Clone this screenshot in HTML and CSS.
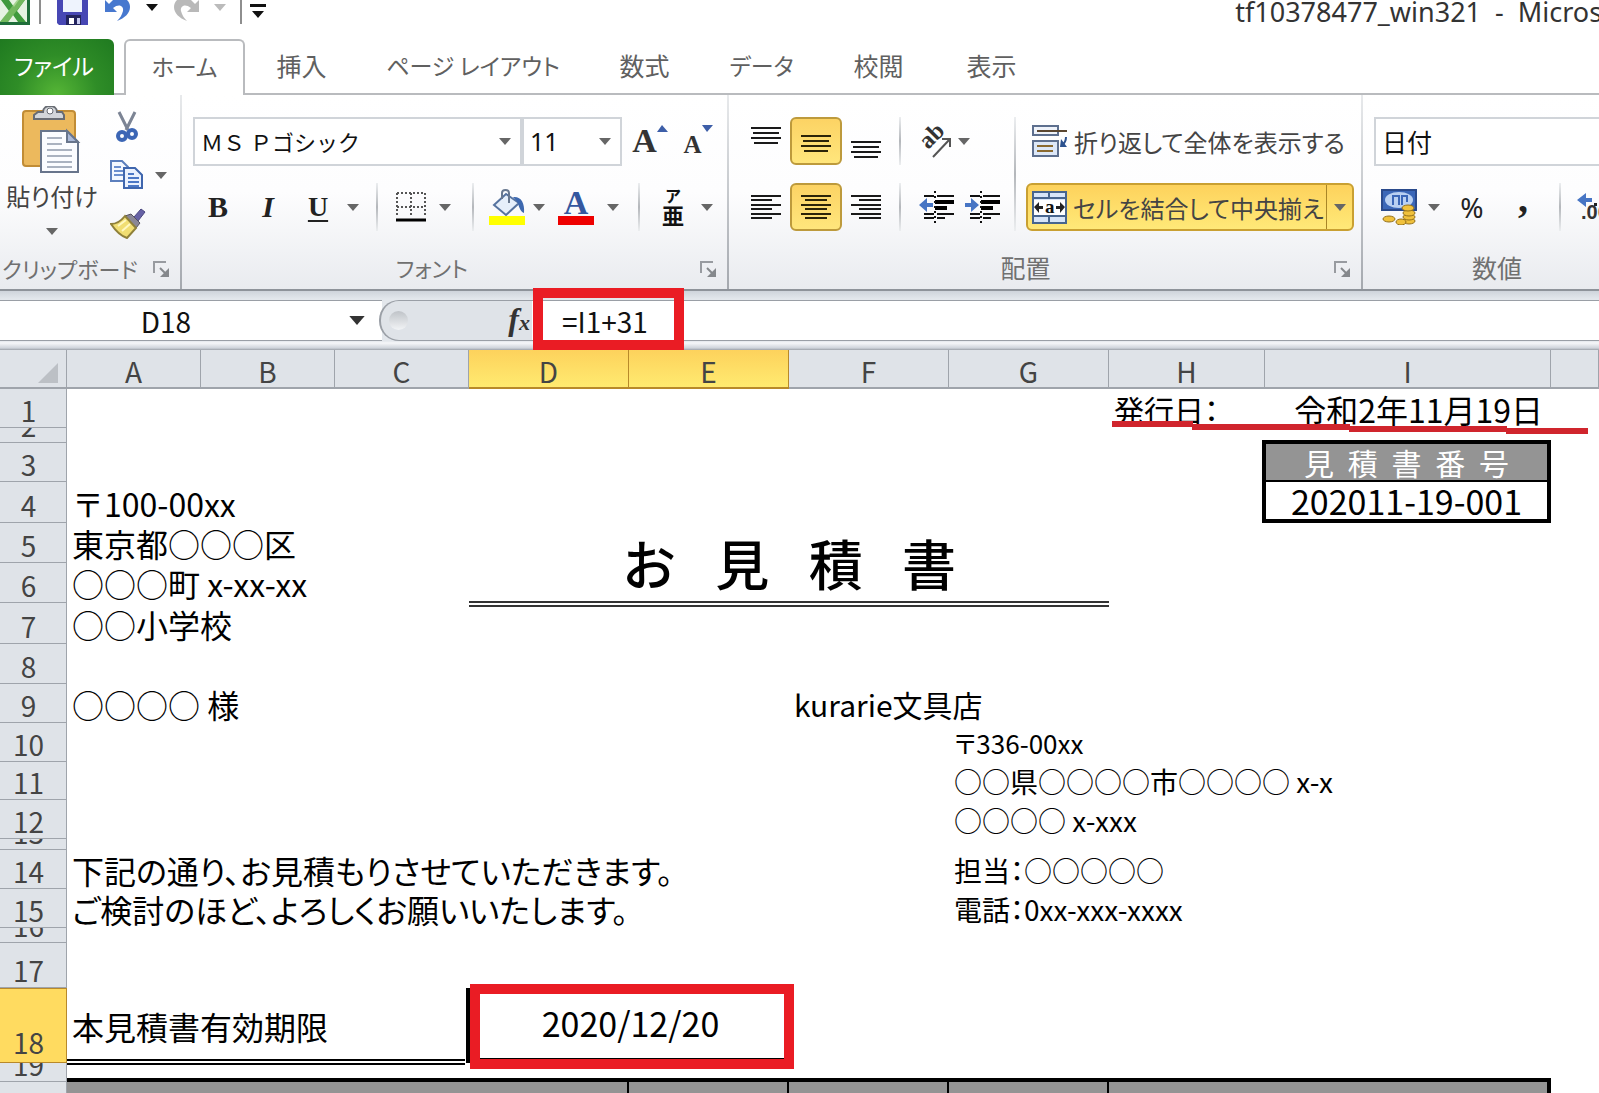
FILE: index.html
```html
<!DOCTYPE html>
<html lang="ja">
<head>
<meta charset="utf-8">
<title>tf10378477_win321 - Microsoft Excel</title>
<link rel="stylesheet" href="styles.css">
</head>
<body>
<svg class="defs" aria-hidden="true">
  <symbol id="caret" viewBox="0 0 12 7"><path d="M0 0h12L6 7z" fill="currentColor"/></symbol>
  <symbol id="launcher" viewBox="0 0 17 17"><path d="M1 12V1h12" fill="none" stroke="#989ba0" stroke-width="2"/><path d="M7 7l6 6" stroke="#85888c" stroke-width="2"/><path d="M16 7v9H7z" fill="#85888c"/></symbol>
</svg>
<div class="app">
  <header class="titlebar">
    <div class="quick">
      <svg class="logo" width="31" height="26" viewBox="0 0 31 26"><path d="M0 0h30v25H0z" fill="#1f6e3a"/><path d="M0 0h27v22H0z" fill="#e6f3e2"/><path d="M1 0h8l5 7 5-7h6l-8 11 9 11h-8l-5-7-5 7H0l9-11z" fill="#3f9a3c"/><path d="M17 0h8L8 22H0z" fill="#8ac66c" opacity=".7"/></svg>
      <span class="rule"></span>
      <button class="qbtn save" aria-label="上書き保存"><svg width="31" height="25" viewBox="0 0 31 25"><path d="M0 0h31v25H2l-2-2z" fill="#4747b4"/><path d="M6 0h19v12H6z" fill="#eef3fd"/><path d="M9 15h15v10H9z" fill="#23245e"/><path d="M12 18h5v6h-5z" fill="#fff"/><path d="M20 18h3v6h-3z" fill="#c8ccf2"/></svg></button>
      <button class="qbtn undo" aria-label="元に戻す"><svg width="28" height="22" viewBox="0 0 28 22"><path d="M1 0v12h12L9 8c6-5 11-2 10 3-1 4-3 7-6 10 8-3 13-8 13-14 0-3-1-5-3-7H9L5 4z" fill="#4778cf"/></svg></button>
      <button class="qbtn drop" aria-label="元に戻す一覧"><svg width="12" height="7"><use href="#caret"/></svg></button>
      <button class="qbtn redo" aria-label="やり直し"><svg width="28" height="22" viewBox="0 0 28 22"><path d="M27 0v12H15l4-4C13 3 8 6 9 11c1 4 3 7 6 10C7 18 2 13 2 7c0-3 1-5 3-7h14l4 4z" fill="#b9b9b9"/></svg></button>
      <button class="qbtn drop off" aria-label="やり直し一覧"><svg width="12" height="7"><use href="#caret"/></svg></button>
      <span class="rule"></span>
      <button class="qbtn custom" aria-label="クイック アクセス ツール バーのカスタマイズ"><svg width="16" height="14" viewBox="0 0 16 14"><path d="M0 0h16v3H0zM2 7h12l-6 7z" fill="#111"/></svg></button>
    </div>
    <div class="doc-title">tf10378477_win321&nbsp; -&nbsp; Microsoft Excel</div>
  </header>

  <nav class="tabs">
    <button class="tab file kana">ファイル</button>
    <button class="tab active kana">ホーム</button>
    <button class="tab">挿入</button>
    <button class="tab wide kana">ページ レイアウト</button>
    <button class="tab">数式</button>
    <button class="tab mid kana">データ</button>
    <button class="tab">校閲</button>
    <button class="tab">表示</button>
  </nav>

  <section class="ribbon">
    <div class="group clipboard">
      <div class="clip-body">
        <button class="paste">
          <svg width="60" height="68" viewBox="0 0 60 68"><rect x="1" y="5" width="52" height="55" rx="3" fill="#ecb95d" stroke="#c18c35" stroke-width="2"/><path d="M12 13V9l4-3h5c0-8 14-8 14 0h5l2 3v4z" fill="#d3d6da" stroke="#686c73" stroke-width="2"/><circle cx="28" cy="5" r="3" fill="#fff" stroke="#686c73"/><path d="M19 25h26l11 11v30H19z" fill="#fbfcff" stroke="#68758c" stroke-width="2"/><path d="M45 25v11h11z" fill="#aab9d8" stroke="#68758c" stroke-width="2"/><path d="M25 32h15M25 38h15M25 44h25M25 50h25M25 56h25M25 61h25" stroke="#aab2c0" stroke-width="2"/></svg>
          <span class="ptext">貼り付け</span>
          <svg class="caret" width="12" height="7"><use href="#caret"/></svg>
        </button>
        <div class="clip-tools">
          <button class="ic" aria-label="切り取り"><svg width="22" height="32" viewBox="0 0 22 32"><path d="M3 1l9 18M19 1l-9 18" stroke="#7c8494" stroke-width="3"/><circle cx="6" cy="25" r="4" fill="none" stroke="#3c66b5" stroke-width="4"/><circle cx="16" cy="23" r="4" fill="none" stroke="#3c66b5" stroke-width="4"/></svg></button>
          <div class="pair"><button class="ic" aria-label="コピー"><svg width="34" height="30" viewBox="0 0 34 30"><path d="M1 1h11l6 6v14H1z" fill="#f4f8ff" stroke="#5c7fbd" stroke-width="2"/><path d="M4 7h7M4 11h10M4 15h10" stroke="#6c8fce" stroke-width="2"/><path d="M14 8h11l7 7v13H14z" fill="#eaf1fe" stroke="#3f66ae" stroke-width="2"/><path d="M18 14h6M18 18h11M18 22h11M18 26h11" stroke="#4c78c6" stroke-width="2"/></svg></button><button class="ic arrow" aria-label="コピーの種類"><svg width="12" height="7"><use href="#caret"/></svg></button></div>
          <button class="ic" aria-label="書式のコピー"><svg width="36" height="31" viewBox="0 0 36 31"><path d="M24 9l7-8 4 3-7 9z" fill="#6661a5" stroke="#4a467f"/><path d="M15 8l6-2 9 9-4 5z" fill="#8a8796" stroke="#55525f"/><path d="M15 8l11 12-9 10C11 28 5 22 1 16c6 0 10-3 14-8z" fill="#f1de72" stroke="#8f803a" stroke-width="2"/><path d="M8 18l8-6M12 23l8-7" stroke="#fff8c0" stroke-width="2"/></svg></button>
        </div>
      </div>
      <div class="caption start kana"><span>クリップボード</span><button class="launch" aria-label="クリップボードの詳細"><svg width="17" height="17"><use href="#launcher"/></svg></button></div>
    </div>

    <div class="group font">
      <div class="line">
        <span class="combo face"><select aria-label="フォント"><option>ＭＳ Ｐゴシック</option></select><svg class="caret" width="12" height="7"><use href="#caret"/></svg></span>
        <span class="combo size"><select aria-label="フォント サイズ"><option>11</option></select><svg class="caret" width="12" height="7"><use href="#caret"/></svg></span>
        <button class="ic w56 grow" aria-label="フォント サイズの拡大"><span class="bigA">A</span><svg class="tri" width="11" height="7" viewBox="0 0 11 7"><path d="M0 7h11L5 0z" fill="#3d5ea8"/></svg></button>
        <button class="ic w40 grow" aria-label="フォント サイズの縮小"><span class="smallA">A</span><svg class="tri" width="11" height="7" viewBox="0 0 11 7"><path d="M0 0h11L5 7z" fill="#3d5ea8"/></svg></button>
      </div>
      <div class="line">
        <button class="ic w50 serif bold">B</button>
        <button class="ic w50 serif italic">I</button>
        <button class="ic w50 serif under">U</button>
        <button class="ic w20" aria-label="下線の種類"><svg width="12" height="7"><use href="#caret"/></svg></button>
        <span class="sep"></span>
        <button class="ic w40" aria-label="罫線"><svg width="30" height="30" viewBox="0 0 30 30"><path d="M1 1h28M1 15h28M1 1v24M15 1v24M29 1v24" stroke="#555" stroke-width="2" stroke-dasharray="2 2" fill="none"/><path d="M0 28h30" stroke="#000" stroke-width="3"/></svg></button>
        <button class="ic w28" aria-label="罫線の種類"><svg width="12" height="7"><use href="#caret"/></svg></button>
        <span class="sep"></span>
        <button class="ic w40" aria-label="塗りつぶしの色"><svg width="36" height="36" viewBox="0 0 36 36"><path d="M0 27h36v9H0z" fill="#ff0"/><path d="M5 16L17 5l13 9-13 12z" fill="#e6effa" stroke="#56739f" stroke-width="2"/><path d="M13 10V4c0-4 7-4 7 0v10" fill="none" stroke="#68788f" stroke-width="2"/><path d="M24 8c8-1 12 6 11 16-3-1-5-5-6-10z" fill="#3d68af"/></svg></button>
        <button class="ic w24" aria-label="塗りつぶしの色一覧"><svg width="12" height="7"><use href="#caret"/></svg></button>
        <button class="ic w50 colorA" aria-label="フォントの色"><span>A</span></button>
        <button class="ic w24" aria-label="フォントの色一覧"><svg width="12" height="7"><use href="#caret"/></svg></button>
        <span class="sep"></span>
        <button class="ic w40 ruby" aria-label="ふりがなの表示"><span class="rt">ア</span><span class="rb">亜</span></button>
        <button class="ic w28" aria-label="ふりがなの設定"><svg width="12" height="7"><use href="#caret"/></svg></button>
      </div>
      <div class="caption kana"><span>フォント</span><button class="launch" aria-label="フォントの詳細"><svg width="17" height="17"><use href="#launcher"/></svg></button></div>
    </div>

    <div class="group align">
      <div class="align-body">
        <div class="stack">
          <div class="line">
            <button class="ic w40" aria-label="上揃え"><svg width="32" height="34" viewBox="0 0 32 34"><path d="M1 4h30M3 9h26M1 14h30M4 19h24" stroke="#1a1a1a" stroke-width="2"/></svg></button>
            <button class="ic on" aria-label="上下中央揃え"><svg width="32" height="34" viewBox="0 0 32 34"><path d="M1 12h30M3 17h26M1 22h30M4 27h24" stroke="#2c2408" stroke-width="2"/></svg></button>
            <button class="ic w40" aria-label="下揃え"><svg width="32" height="34" viewBox="0 0 32 34"><path d="M1 18h30M3 23h26M1 28h30M4 33h24" stroke="#1a1a1a" stroke-width="2"/></svg></button>
            <span class="sep"></span>
            <button class="ic w40" aria-label="方向"><svg width="36" height="34" viewBox="0 0 36 34"><text x="12" y="26" transform="rotate(-45 12 26)" class="abtext">ab</text><path d="M17 33L34 15M26 15h8v8" fill="none" stroke="#555" stroke-width="2"/></svg></button>
            <button class="ic w20" aria-label="方向の種類"><svg width="12" height="7"><use href="#caret"/></svg></button>
          </div>
          <div class="line">
            <button class="ic w40" aria-label="左揃え"><svg width="32" height="28" viewBox="0 0 32 28"><path d="M1 3h30M1 7h21M1 12h30M1 16h21M1 21h30M1 25h21" stroke="#1a1a1a" stroke-width="2"/></svg></button>
            <button class="ic on" aria-label="中央揃え"><svg width="32" height="28" viewBox="0 0 32 28"><path d="M1 3h30M5 7h22M1 12h30M5 16h22M1 21h30M5 25h22" stroke="#2c2408" stroke-width="2"/></svg></button>
            <button class="ic w40" aria-label="右揃え"><svg width="32" height="28" viewBox="0 0 32 28"><path d="M1 3h30M9 7h22M1 12h30M9 16h22M1 21h30M9 25h22" stroke="#1a1a1a" stroke-width="2"/></svg></button>
            <span class="sep"></span>
            <button class="ic w46" aria-label="インデントを減らす"><svg width="36" height="34" viewBox="0 0 36 34"><path d="M5 6h10M18 6h17M5 24h10M18 24h17M5 28h10M18 28h8" stroke="#111" stroke-width="2"/><path d="M16 12h19M16 18h12" stroke="#000" stroke-width="4"/><path d="M16 1v32" stroke="#111" stroke-width="2" stroke-dasharray="2 3"/><path d="M0 15l8-7v5h6v4H8v5z" fill="#4775c4"/></svg></button>
            <button class="ic w46" aria-label="インデントを増やす"><svg width="36" height="34" viewBox="0 0 36 34"><path d="M5 6h10M18 6h17M5 24h10M18 24h17M5 28h10M18 28h8" stroke="#111" stroke-width="2"/><path d="M16 12h19M16 18h12" stroke="#000" stroke-width="4"/><path d="M16 1v32" stroke="#111" stroke-width="2" stroke-dasharray="2 3"/><path d="M14 15L6 8v5H0v4h6v5z" fill="#4775c4"/></svg></button>
          </div>
        </div>
        <span class="longsep"></span>
        <div class="stack right-col">
          <button class="wrapbtn"><svg width="36" height="34" viewBox="0 0 36 34"><rect x="1" y="2" width="25" height="9" fill="#eff3fa" stroke="#5d6f8e" stroke-width="2"/><path d="M5 7h30" stroke="#5a4630" stroke-width="2"/><rect x="1" y="17" width="25" height="15" fill="#dde8f8" stroke="#5d6f8e" stroke-width="2"/><path d="M5 22h16M5 27h16" stroke="#8a6a30" stroke-width="2"/><path d="M34 13c0 4-1 6-4 8" fill="none" stroke="#2d528f" stroke-width="2"/><path d="M28 23h7l-6-8z" fill="#2d528f"/></svg><span>折り返して全体を表示する</span></button>
          <div class="merge"><button class="merge-main"><svg width="35" height="33" viewBox="0 0 35 33"><path d="M1 1h33v31H1z" fill="#d7e5f8" stroke="#47658e" stroke-width="2"/><path d="M1 7h33M1 25h33M17 1v6M17 25v7" stroke="#47658e" stroke-width="2"/><path d="M2 9h31v15H2z" fill="#fff"/><path d="M2 16l5-5v4h4v3H7v4zM33 16l-5-5v4h-4v3h4v4z" fill="#222"/><text x="13" y="22" class="atext">a</text></svg><span>セルを結合して中央揃え</span></button><button class="merge-drop" aria-label="結合の種類"><svg width="12" height="7"><use href="#caret"/></svg></button></div>
        </div>
      </div>
      <div class="caption"><span>配置</span><button class="launch" aria-label="配置の詳細"><svg width="17" height="17"><use href="#launcher"/></svg></button></div>
    </div>

    <div class="group number">
      <div class="line"><span class="combo format"><select aria-label="表示形式"><option>日付</option></select></span></div>
      <div class="line">
        <button class="ic w50" aria-label="通貨表示形式"><svg width="36" height="36" viewBox="0 0 36 36"><rect x="1" y="1" width="34" height="20" fill="#3b67b8" stroke="#2a4a8c" stroke-width="2"/><ellipse cx="18" cy="11" rx="14" ry="8" fill="#b9d0f2"/><path d="M12 16V7h6v9M21 16V7h5v6" fill="none" stroke="#3b67b8" stroke-width="2"/><g fill="#f0c13c" stroke="#94701a"><ellipse cx="28" cy="32" rx="6" ry="3"/><ellipse cx="28" cy="28" rx="6" ry="3"/><ellipse cx="28" cy="24" rx="6" ry="3"/><ellipse cx="27" cy="19" rx="6" ry="3"/><ellipse cx="20" cy="33" rx="5" ry="3"/><ellipse cx="8" cy="30" rx="6" ry="3"/></g></svg></button>
        <button class="ic w20" aria-label="通貨の種類"><svg width="12" height="7"><use href="#caret"/></svg></button>
        <button class="ic w56 percent">%</button>
        <button class="ic w46 comma">,</button>
        <span class="sep"></span>
        <button class="ic w50 decimal" aria-label="小数点以下の表示桁数を増やす"><svg width="46" height="32" viewBox="0 0 46 32"><path d="M1 9l9-7v5h6v4h-6v5z" fill="#4775c4"/><text x="5" y="28" class="dectext">.00</text><path d="M18 12h3v3h-3z" fill="#222"/></svg></button>
      </div>
      <div class="caption"><span>数値</span></div>
    </div>
  </section>

  <section class="formula">
    <input class="namebox" aria-label="名前ボックス" value="D18">
    <button class="namedrop" aria-label="名前の一覧"><svg width="16" height="9"><use href="#caret"/></svg></button>
    <div class="fx"><span class="knob"></span><button class="fxbtn" aria-label="関数の挿入"><i>f</i><i class="x">x</i></button></div>
    <div class="entry"><input aria-label="数式バー" value="=I1+31"><span class="mark"></span></div>
  </section>

  <main class="sheet">
    <table>
      <colgroup><col class="c-head"><col class="c-a"><col class="c-a"><col class="c-a"><col class="c-d"><col class="c-d"><col class="c-d"><col class="c-d"><col class="c-h"><col class="c-i"><col></colgroup>
      <thead><tr><th class="corner"><svg width="20" height="20" viewBox="0 0 20 20"><path d="M20 0v20H0z" fill="#bcc0c5"/></svg></th><th>A</th><th>B</th><th>C</th><th class="sel">D</th><th class="sel">E</th><th>F</th><th>G</th><th>H</th><th>I</th><th></th></tr></thead>
      <tbody>
        <tr><th><div>1</div></th><td colspan="7"></td><td class="t30">発行日：<svg class="stroke" width="476" height="14" viewBox="0 0 476 14"><path d="M0 3h81M80 6h158M237 8h158M394 10h82" stroke="#d0252d" stroke-width="6"/></svg></td><td class="right">令和2年11月19日</td><td></td></tr>
        <tr class="h15"><th><div>2</div></th><td colspan="10"></td></tr>
        <tr><th><div>3</div></th><td colspan="8"></td><td class="numhead">見積書番号</td><td></td></tr>
        <tr class="h41"><th><div>4</div></th><td colspan="8">〒100-00xx</td><td class="numval">202011-19-001</td><td></td></tr>
        <tr class="h40"><th><div>5</div></th><td colspan="3">東京都○○○区</td><td colspan="4" rowspan="2" class="heading"><div>お見積書</div></td><td colspan="3"></td></tr>
        <tr class="h40"><th><div>6</div></th><td colspan="3">○○○町 x-xx-xx</td><td colspan="3"></td></tr>
        <tr class="h41"><th><div>7</div></th><td colspan="10">○○小学校</td></tr>
        <tr class="h40"><th><div>8</div></th><td colspan="10"></td></tr>
        <tr><th><div>9</div></th><td colspan="5">○○○○ 様</td><td colspan="5" class="t30">kurarie文具店</td></tr>
        <tr><th><div>10</div></th><td colspan="6"></td><td colspan="4" class="t26">〒336-00xx</td></tr>
        <tr class="h38"><th><div>11</div></th><td colspan="6"></td><td colspan="4" class="t28">○○県○○○○市○○○○ x-x</td></tr>
        <tr><th><div>12</div></th><td colspan="6"></td><td colspan="4" class="t28">○○○○ x-xxx</td></tr>
        <tr class="h11"><th><div>13</div></th><td colspan="10"></td></tr>
        <tr><th><div>14</div></th><td colspan="6" class="prose">下記の通り、お見積もりさせていただきます。</td><td colspan="4" class="t28">担当：○○○○○</td></tr>
        <tr><th><div>15</div></th><td colspan="6" class="prose">ご検討のほど、よろしくお願いいたします。</td><td colspan="4" class="t28">電話：0xx-xxx-xxxx</td></tr>
        <tr class="h15"><th><div>16</div></th><td colspan="10"></td></tr>
        <tr class="h45"><th><div>17</div></th><td colspan="10"></td></tr>
        <tr class="h75"><th class="sel"><div>18</div></th><td colspan="3" class="limit">本見積書有効期限</td><td colspan="2" class="deadline">2020/12/20<span class="mark"></span></td><td colspan="5"></td></tr>
        <tr class="h19"><th><div>19</div></th><td colspan="10"></td></tr>
        <tr class="items"><th><div></div></th><td colspan="4"></td><td></td><td></td><td></td><td colspan="2"></td><td class="outside"></td></tr>
      </tbody>
    </table>
  </main>
</div>
</body>
</html>
```
FILE: styles.css
```css
* { box-sizing: border-box; }

body {
  margin: 0;
  background: #fff;
  color: #111;
  font-family: "Noto Sans CJK JP", sans-serif;
}

button, input, select {
  margin: 0;
  padding: 0;
  border: 0;
  background: none;
  color: inherit;
  font: inherit;
}

svg { display: block; flex: none; }
.defs { position: absolute; width: 0; height: 0; }

.app {
  display: flex;
  flex-direction: column;
  height: 100vh;
  overflow: hidden;
}

/* title bar */
.titlebar {
  display: flex;
  justify-content: space-between;
  height: 39px;
  flex: none;
}
.quick { display: flex; align-items: flex-start; }
.rule { width: 2px; height: 24px; margin: 0 8px; background: #8e8e8e; }
.qbtn { display: flex; justify-content: center; }
.save { margin: 0 8px; }
.undo { width: 44px; }
.redo { width: 44px; }
.drop { width: 24px; padding-top: 4px; color: #111; }
.drop.off { color: #bbb; }
.custom { padding-top: 4px; }
.doc-title {
  width: 23%;
  padding-left: 4px;
  overflow: hidden;
  white-space: nowrap;
  color: #333;
  font: 27px/24px "Noto Sans", sans-serif;
}

/* ribbon tabs */
.tabs {
  display: flex;
  flex: none;
  height: 56px;
  border-bottom: 2px solid #b9bbbe;
}
.tab {
  width: 113px;
  height: 56px;
  padding-bottom: 4px;
  color: #606060;
  font-size: 25px;
  font-feature-settings: "palt";
  white-space: nowrap;
}
.tab.kana { font-size: 23px; }
.tab.file {
  width: 114px;
  margin-right: 10px;
  padding-right: 6px;
  border-radius: 0 6px 0 0;
  background: radial-gradient(ellipse at 50% 100%, #56b636 0, #2f8d27 50%, #1f7a20 100%);
  color: #fff;
}
.tab.active {
  width: 121px;
  border: 2px solid #b9bbbe;
  border-bottom: 0;
  border-radius: 6px 6px 0 0;
  background: #fff;
}
.tab.wide { width: 230px; }
.tab.mid { width: 121px; }

/* ribbon body */
.ribbon {
  display: flex;
  flex: none;
  height: 196px;
  border-bottom: 2px solid #8e939a;
  background: linear-gradient(#fff 0, #fdfdfe 50%, #e9ebef 100%);
  color: #444;
}
.group {
  display: flex;
  flex-direction: column;
  flex: none;
  gap: 18px;
  padding: 22px 0 0 11px;
  border-right: 2px solid;
  border-image: linear-gradient(#e8eaec, #a4a8ae) 1;
}
.clipboard { width: 182px; padding: 8px 0 0; gap: 0; }
.font { width: 547px; }
.align { width: 634px; padding-left: 17px; }
.number { flex: 1; min-width: 0; border-right: 0; overflow: hidden; }

.line { display: flex; align-items: center; flex: none; height: 48px; }
.ic { display: flex; align-items: center; justify-content: center; flex: none; height: 48px; color: #222; }
.ic use, .caret, .merge-drop { color: #666; }
.w20 { width: 20px; }
.w24 { width: 24px; }
.w28 { width: 28px; }
.w40 { width: 40px; }
.w46 { width: 46px; }
.w50 { width: 50px; }
.w56 { width: 56px; }
.sep {
  flex: none;
  width: 28px;
  height: 48px;
  background: linear-gradient(#eceef0, #b4b7bb, #eceef0) center / 2px 100% no-repeat;
}

.clip-body { display: flex; height: 144px; flex: none; }
.paste {
  display: flex;
  flex-direction: column;
  align-items: center;
  width: 104px;
  padding-top: 3px;
  font-size: 24px;
  line-height: 32px;
  color: #444;
}
.paste .caret { margin-top: 16px; }
.ptext { margin-top: 6px; font-feature-settings: "palt"; white-space: nowrap; }
.clip-tools { display: flex; flex-direction: column; align-items: flex-start; padding-left: 6px; }
.clip-tools .ic { min-width: 34px; }
.pair { display: flex; }

.caption {
  display: flex;
  align-items: center;
  justify-content: center;
  position: relative;
  height: 40px;
  padding-right: 56px;
  color: #707070;
  font-size: 25px;
  font-feature-settings: "palt";
  white-space: nowrap;
}
.caption.kana { font-size: 22px; }
.group:not(.clipboard) .caption { margin-top: -2px; }
.caption.start { justify-content: flex-start; padding: 0 0 0 2px; height: 42px; }
.launch { position: absolute; right: 10px; top: 14px; }

.combo {
  display: flex;
  align-items: center;
  flex: none;
  height: 49px;
  border: 2px solid #d0d4d9;
  background: #fff;
}
.combo select {
  flex: 1;
  min-width: 0;
  height: 100%;
  padding: 0 6px;
  appearance: none;
  color: #111;
  font-size: 22px;
}
.combo .caret { margin-right: 9px; }
.combo.face { width: 329px; }
.combo.size { width: 100px; }
.combo.size select { font: 25px "Noto Sans", sans-serif; }
.combo.format { width: 320px; }
.combo.format select { font-size: 25px; }

.bigA, .smallA { color: #333; font-family: "Liberation Serif", serif; font-weight: bold; line-height: 48px; }
.bigA { font-size: 34px; }
.smallA { font-size: 25px; padding-top: 4px; }
.grow { align-items: flex-start; }
.grow .tri { margin-top: 8px; }
.serif { font: 30px/48px "Liberation Serif", serif; }
.serif.bold, .serif.under { font-weight: bold; }
.serif.italic { font-style: italic; font-weight: bold; }
.serif.under { text-decoration: underline; text-underline-offset: 4px; font-size: 28px; }
.colorA span {
  width: 36px;
  height: 36px;
  border-bottom: 9px solid #e00;
  color: #35579f;
  font: bold 34px/27px "Liberation Serif", serif;
}
.ruby { flex-direction: column; font-weight: 700; color: #111; }
.ruby .rt { font-size: 16px; line-height: 14px; }
.ruby .rb { font-size: 22px; line-height: 24px; }

.align-body { display: flex; height: 114px; flex: none; }
.stack { display: flex; flex-direction: column; flex: none; gap: 18px; }
.on {
  width: 52px;
  margin: 0 4px;
  border: 2px solid #bd9a3c;
  border-radius: 6px;
  background: linear-gradient(#fcd364, #ffe67c);
}
.abtext { font: bold 24px "Liberation Serif", serif; fill: #333; }
.atext { font: bold 19px "Liberation Serif", serif; fill: #111; }
.dectext { font: bold 20px "Liberation Sans", sans-serif; fill: #333; }
.longsep {
  width: 2px;
  margin: 0 10px 0 8px;
  background: linear-gradient(#eceef0, #b4b7bb, #eceef0);
}
.wrapbtn, .merge-main {
  display: flex;
  align-items: center;
  gap: 6px;
  height: 48px;
  padding-left: 6px;
  color: #444;
  font-size: 24px;
  font-feature-settings: "palt";
  white-space: nowrap;
}
.merge {
  display: flex;
  width: 328px;
  height: 48px;
  border: 2px solid #c9a032;
  border-radius: 6px;
  background: linear-gradient(#fdd25c, #ffe978);
}
.merge-main { flex: 1; height: 44px; padding-left: 4px; }
.merge-drop { display: flex; align-items: center; justify-content: center; width: 26px; border-left: 1px solid #a98527; }
.percent { font: 28px "Noto Sans", sans-serif; }
.comma { font: bold 40px/20px "Liberation Serif", serif; padding-bottom: 16px; }
.number .caption { width: 246px; padding-right: 0; }

/* formula bar */
.formula {
  display: flex;
  flex: none;
  height: 59px;
  padding: 9px 0;
  background: linear-gradient(#cfd4db 0, #e3e7ec 8px, #e3e7ec 50px, #f6f7f9 52px, #cfd4db 57px, #9da2a9 59px);
  font-size: 28px;
}
.formula > * { border-top: 1px solid #9a9fa6; border-bottom: 1px solid #9a9fa6; }
.namebox { width: 332px; background: #fff; text-align: center; }
.namedrop { display: flex; align-items: center; justify-content: center; width: 50px; background: #fff; color: #333; }
.namedrop use { color: #333; }
.fx {
  display: flex;
  align-items: center;
  justify-content: space-between;
  width: 153px;
  margin-left: -3px;
  padding: 0 2px 0 8px;
  border-left: 2px solid #9a9fa6;
  border-radius: 20px 0 0 20px;
  background: #dfe3e8;
}
.knob { width: 19px; height: 19px; border-radius: 50%; background: linear-gradient(#bfc3c8, #f2f4f6); }
.fxbtn { color: #333; font: bold 32px/36px "Liberation Serif", serif; }
.fxbtn .x { font-size: 22px; }
.entry { position: relative; flex: 1; min-width: 0; background: #fff; }
.entry input { width: 100%; height: 100%; padding-left: 30px; }
.mark { position: absolute; border: 10px solid #ea1c24; }
.entry .mark { left: 1px; top: -13px; width: 151px; height: 62px; }

/* worksheet */
.sheet { flex: 1; min-height: 0; overflow: hidden; }
table { width: 100%; table-layout: fixed; border-collapse: separate; border-spacing: 0; }
.c-head { width: 67px; }
.c-a { width: 134px; }
.c-d { width: 160px; }
.c-h { width: 156px; }
.c-i { width: 286px; }

th {
  padding: 0;
  border-right: 1px solid #9fa4ab;
  border-bottom: 1px solid #9fa4ab;
  background: #dfe3e8;
  color: #444;
  font-size: 28px;
  font-weight: 400;
  line-height: 30px;
}
thead th { height: 39px; padding-top: 4px; border-bottom-width: 2px; }
th.sel { border-color: #b8892a; }
thead th.sel { background: linear-gradient(#fdd25c, #ffea70); }
tbody th.sel { background: #ffdb60; border-top: 1px solid #b8892a; }
.corner svg { margin: 4px 0 0 38px; }
tbody th { vertical-align: bottom; }
tbody th div {
  display: flex;
  align-items: flex-end;
  justify-content: center;
  height: 32px;
  padding: 0 9px 2px 0;
  overflow: hidden;
}
tbody tr { height: 39px; }
tbody tr.h11 { height: 11px; }
tbody tr.h15 { height: 15px; }
tbody tr.h19 { height: 19px; }
tbody tr.h38 { height: 38px; }
tbody tr.h40 { height: 40px; }
tbody tr.h41 { height: 41px; }
tbody tr.h45 { height: 45px; }
tbody tr.h75 { height: 75px; }
.h11 th div { height: 10px; }
.h15 th div { height: 14px; }
.h19 th div { height: 18px; }
.h75 th div { height: 36px; padding-bottom: 5px; }

td {
  position: relative;
  padding: 0 5px;
  font-size: 32px;
  line-height: 36px;
  white-space: nowrap;
  color: #000;
}
.t30, .t28, .t26, .prose { font-feature-settings: "palt"; }
.t30 { font-size: 30px; }
.t28 { font-size: 28px; }
.t26 { font-size: 26px; }
.right { text-align: right; padding-right: 8px; }
.stroke { position: absolute; left: 3px; top: 32px; z-index: 2; }

.numhead {
  padding: 0 38px;
  border: 1px solid #000;
  border-width: 1px 4px 2px 1px;
  box-shadow: -3px -3px 0 #000, -3px 0 0 #000, 0 -3px 0 #000;
  background: #949494;
  color: #fff;
  font-size: 30px;
  text-align: justify;
  text-align-last: justify;
}
.numval {
  border: 1px solid #000;
  border-width: 0 4px 4px 1px;
  box-shadow: -3px 0 0 #000;
  font-size: 34px;
  text-align: center;
}
.heading { padding: 0; text-align: center; }
.heading div {
  width: 334px;
  margin: 0 auto;
  font-size: 54px;
  font-weight: 500;
  line-height: 64px;
  text-align-last: justify;
}
.heading::after {
  content: "";
  position: absolute;
  left: 0;
  right: 0;
  bottom: -4px;
  height: 2px;
  border: 2px solid #333;
  border-width: 2px 0;
}
.limit::after {
  content: "";
  position: absolute;
  left: 0;
  right: 4px;
  bottom: -2px;
  height: 2px;
  border: 2px solid #000;
  border-width: 2px 0;
}
.deadline {
  border-left: 3px solid #000;
  border-bottom: 5px solid #000;
  box-shadow: -3px 0 0 #000;
  font-size: 34px;
  text-align: center;
}
.deadline .mark { left: -2px; top: -4px; width: 324px; height: 85px; }

.items td { border-right: 2px solid #000; box-shadow: 0 -4px 0 #000; background: #949494; }
.items td:nth-last-child(2) { border-right-width: 4px; }
.items .outside { border: 0; box-shadow: none; background: none; }
```
